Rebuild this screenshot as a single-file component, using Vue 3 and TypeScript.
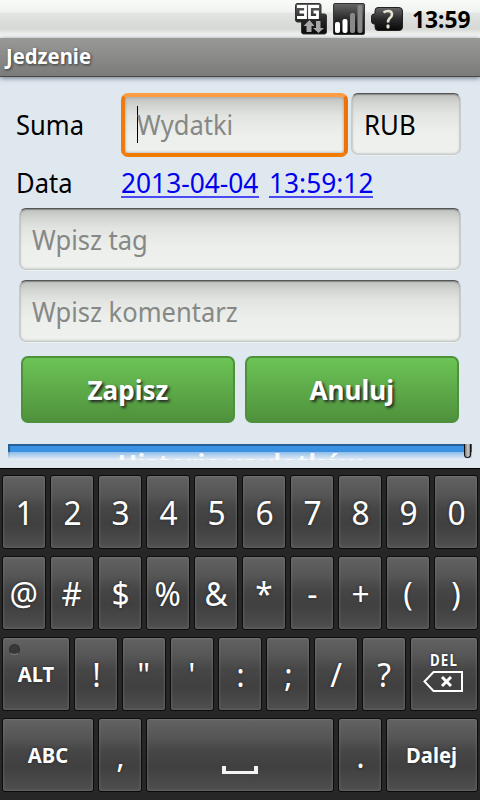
<script setup lang="ts">
interface Key {
  label: string
  size?: 'alt' | 'wide' | 'space'
  kind?: 'text' | 'alt' | 'del' | 'space'
}

const chars = (s: string): Key[] => s.split('').map((label) => ({ label }))

const rows: Key[][] = [
  chars('1234567890'),
  chars('@#$%&*-+()'),
  [{ label: 'ALT', size: 'alt', kind: 'alt' }, ...chars('!"\':;/?'), { label: 'DEL', size: 'alt', kind: 'del' }],
  [
    { label: 'ABC', size: 'wide', kind: 'text' },
    { label: ',' },
    { label: '', size: 'space', kind: 'space' },
    { label: '.' },
    { label: 'Dalej', size: 'wide', kind: 'text' },
  ],
]
</script>

<template>
  <div class="screen">
    <header class="status">
      <svg class="net" width="34" height="34" viewBox="0 0 34 34">
        <defs>
          <linearGradient id="dark" x1="0" y1="0" x2="0" y2="1">
            <stop offset="0" stop-color="#666" />
            <stop offset=".5" stop-color="#2a2a2a" />
            <stop offset="1" stop-color="#080808" />
          </linearGradient>
        </defs>
        <path d="M3 1.500H25Q27 1.500 27 3.500V12H30.500Q32.500 12 32.500 14V30Q32.500 32 30.500 32H9.500Q7.500 32 7.500 30V20H3.500Q1.500 20 1.500 18V3.500Q1.500 1.500 3.500 1.500Z" fill="url(#dark)" stroke="#333" />
        <path d="M3 4.500H11.500V15.500H3M5.500 10H11.500M25 4.500H15.500V15.500H23.500V10H19.500" fill="none" stroke="#fff" stroke-width="2.800" />
        <path d="M15.500 18L20.500 24H17.500V30H12.500V24H9.500Z" fill="#a8a8a8" />
        <path d="M22 19H26.500V26H30L24.500 31L19 26H22Z" fill="#a8a8a8" />
      </svg>
      <svg class="signal" width="34" height="34" viewBox="0 0 34 34">
        <rect x="1.500" y="1.500" width="31" height="31" rx="1.500" fill="url(#dark)" stroke="#333" />
        <rect x="3" y="20" width="5" height="11" rx="2" fill="#fff" />
        <rect x="10.500" y="17" width="5" height="14" rx="2" fill="#fff" />
        <rect x="18" y="11" width="5" height="20" rx="2" fill="#888" />
        <rect x="25.500" y="3" width="5" height="28" rx="2" fill="#888" />
      </svg>
      <svg class="battery" width="34" height="34" viewBox="0 0 34 34">
        <path d="M8 5.500H29Q32.500 5.500 32.500 9V25Q32.500 28.500 29 28.500H8Q5 28.500 5 25V22H4Q1.500 22 1.500 19V15Q1.500 12 4 12H5V9Q5 5.500 8 5.500Z" fill="url(#dark)" stroke="#222" />
        <path d="M13.500 10.500Q15.500 9 18 9Q22 9 22 12.500Q22 14.500 19.500 16.500Q18 18 18 20.500" fill="none" stroke="#e8e4d4" stroke-width="2.600" />
        <rect x="16.500" y="22.500" width="3" height="4" rx="1" fill="#e8e4d4" />
      </svg>
      <span class="clock">13:59</span>
    </header>
    <div class="title"><span>Jedzenie</span></div>

    <main class="form">
      <div class="row amount">
        <label class="label"><span class="t">Suma</span></label>
        <div class="field focused"><i class="caret"></i><span class="t hint">Wydatki</span></div>
        <div class="field currency"><span class="t">RUB</span></div>
      </div>
      <div class="row date">
        <label class="label"><span class="t">Data</span></label>
        <a class="link day"><span class="t">2013-04-04</span></a>
        <a class="link time"><span class="t">13:59:12</span></a>
      </div>
      <div class="field full"><span class="t hint">Wpisz tag</span></div>
      <div class="field full"><span class="t hint">Wpisz komentarz</span></div>
      <div class="buttons">
        <button class="btn"><span>Zapisz</span></button>
        <button class="btn"><span>Anuluj</span></button>
      </div>
      <div class="history">
        <div class="bar"><span>Historia wydatków</span></div>
        <i class="thumb"></i>
      </div>
    </main>

    <section class="keyboard">
      <div v-for="(row, r) in rows" :key="r" class="keys">
        <div v-for="(k, i) in row" :key="i" class="key" :class="[k.size, k.kind]">
          <i v-if="k.kind === 'alt'" class="led"></i>
          <span v-if="k.label" class="cap">{{ k.label }}</span>
          <svg v-if="k.kind === 'del'" width="40" height="21" viewBox="0 0 40 21">
            <path d="M1.500 10.500L10.500 1H39V20H10.500Z" fill="none" stroke="#fff" stroke-width="2" />
            <path d="M19 6L28 15M28 6L19 15" stroke="#fff" stroke-width="3" />
          </svg>
          <svg v-if="k.kind === 'space'" width="36" height="8" viewBox="0 0 36 8">
            <path d="M0 0H4V5H32V0H36V8H0Z" fill="#f4f4f4" />
          </svg>
        </div>
      </div>
    </section>
  </div>
</template>

<style>
body {
  margin: 0;
}
</style>

<style scoped>
.screen {
  width: 480px;
  height: 800px;
  display: flex;
  flex-direction: column;
  overflow: hidden;
  background: #dfe7ef;
  color: #000;
  font-family: 'Noto Sans', 'Open Sans', sans-serif;
}
.screen * {
  box-sizing: border-box;
}
span {
  display: inline-block;
  white-space: nowrap;
}
svg {
  display: block;
  flex: none;
}
.status {
  height: 38px;
  flex: none;
  display: flex;
  align-items: center;
  padding-left: 294px;
  background: linear-gradient(#f9fbf8 0, #f1f3f0 12px, #e4e6e3 13px, #d5d7d4 29px, #f0f2ef 34px, #fff 38px);
}
.signal {
  margin-left: 4px;
}
.battery {
  margin-left: 4px;
}
.clock {
  margin-left: 8px;
  font-size: 24px;
  line-height: 38px;
  font-weight: 700;
  transform: scaleX(0.95);
  transform-origin: left;
}
.title {
  height: 39px;
  flex: none;
  padding-left: 6px;
  background: linear-gradient(#999a98, #7b7c7a);
  border-bottom: 1px solid #484848;
  box-shadow: 0 1px 5px #66707c;
  color: #fff;
  font-size: 21px;
  line-height: 37px;
  font-weight: 700;
  text-shadow: 1px 1px 3px #333;
}
.title span {
  transform: scaleX(0.965);
  transform-origin: left;
}
.form {
  height: 391px;
  flex: none;
  padding: 16px 8px 0;
}
.t {
  font-size: 27px;
  line-height: 36px;
  transform: scaleX(0.945);
  transform-origin: left;
}
.row {
  display: flex;
}
.amount {
  height: 64px;
}
.label {
  width: 113px;
  padding-left: 8px;
  flex: none;
}
.amount .label {
  padding-top: 14px;
}
.field {
  height: 62px;
  padding: 13px 0 0 12px;
  border-radius: 7px;
  border: 1px solid #c6cac9;
  border-top: 1px solid #555;
  background: linear-gradient(#bfc1bf 0, #d3d5d3 9px, #e3e5e2 20px, #edefec 38px, #eff1ee);
  box-shadow: inset 0 1px 1px #888, inset 0 0 3px #b4b6b4, 0 1px 0 #edf0f2;
}
.field.focused {
  position: relative;
  width: 227px;
  height: 64px;
  border: 4px solid #f07c05;
  border-top-color: #ff9d42;
  border-left-color: #ef7a10;
  border-right-color: #ef7208;
  padding: 10px 0 0 12px;
  box-shadow: inset 0 0 3px #999;
}
.field.currency {
  width: 110px;
  margin-left: 3px;
}
.currency .t {
  transform: scaleX(0.955);
}
.caret {
  position: absolute;
  left: 12px;
  top: 9px;
  width: 1px;
  height: 37px;
  background: #000;
}
.hint {
  color: #868886;
}
.date {
  height: 51px;
  padding-top: 8px;
}
.link {
  display: block;
  height: 33px;
  color: #0000f0;
  border-bottom: 2px solid #4a4af5;
}
.link .t {
  transform: scaleX(0.975);
}
.day {
  width: 138px;
}
.time {
  width: 104px;
  margin-left: 10px;
}
.field.full {
  width: 442px;
  margin: 0 0 10px 11px;
}
.buttons {
  display: flex;
  gap: 10px;
  padding: 4px 0 0 13px;
}
.btn {
  width: 214px;
  height: 67px;
  padding: 0;
  border: 2px solid #4f913a;
  border-radius: 7px;
  background: linear-gradient(#6cc456, #4f913c);
  color: #fff;
  font: 700 27px/63px 'Noto Sans', 'Open Sans', sans-serif;
  text-shadow: 2px 2px 3px #222;
}
.btn span {
  transform: scaleX(0.965);
}
.history {
  position: relative;
  margin-top: 21px;
}
.bar {
  position: relative;
  height: 16px;
  overflow: hidden;
  border-top: 2px solid #275f98;
  background: #3b92e2;
  box-shadow: inset 2px 0 #275f98, inset -2px 0 #275f98;
  color: #fff;
  text-align: center;
  font-size: 27px;
  line-height: 36px;
  font-weight: 700;
}
.bar::after {
  content: '';
  position: absolute;
  inset: 6px 0 0;
  background: linear-gradient(rgba(223, 231, 239, 0.5), #eaeff5);
}
.bar > span {
  position: relative;
  z-index: 2;
  opacity: 0.85;
  transform: scaleX(0.965);
}
.thumb {
  position: absolute;
  z-index: 3;
  right: 1px;
  top: 0;
  width: 7px;
  height: 14px;
  border: 1px solid #111;
  border-top: 0;
  border-radius: 1px 1px 4px 4px;
  background: linear-gradient(90deg, #777, #ccc 60%, #888);
}
.keyboard {
  flex: none;
  height: 332px;
  padding: 6px 2px 0;
  border-top: 1px solid #000;
  background: #262626;
  display: flex;
  flex-direction: column;
  gap: 7px;
}
.keys {
  display: flex;
  gap: 4px;
}
.key {
  position: relative;
  width: 44px;
  height: 74px;
  flex: none;
  display: flex;
  align-items: center;
  justify-content: center;
  border: 1px solid #0c0c0c;
  border-radius: 3px;
  background: linear-gradient(#626262 0, #565656 18px, #474647 32px, #414041 48px, #484848 62px, #505050);
  box-shadow: inset 0 1px 1px #707070, inset 0 0 3px #747474;
  color: #fff;
  font-size: 33px;
  text-shadow: 0 0 3px #222;
}
.key.alt {
  width: 68px;
}
.key.wide {
  width: 92px;
}
.key.space {
  width: 188px;
}
.key .cap {
  line-height: 40px;
  padding-top: 2px;
  transform: scaleX(0.96);
}
.key.text,
.key.alt {
  font-size: 21px;
  font-weight: 700;
}
.key.text .cap,
.key.alt .cap {
  padding-top: 0;
}
.led {
  position: absolute;
  left: 6px;
  top: 6px;
  width: 11px;
  height: 11px;
  border-radius: 50%;
  background: #383838;
  border: 1px solid #303030;
  border-bottom-color: #777;
}
.key.del {
  flex-direction: column;
}
.key.del .cap {
  font-size: 16px;
  line-height: 17px;
  letter-spacing: 1.5px;
  margin: -5px -1px 2px 0;
  transform: scaleX(0.83);
}
.key.del svg {
  margin-right: 2px;
}
.key.space svg {
  margin-top: 29px;
}
</style>
